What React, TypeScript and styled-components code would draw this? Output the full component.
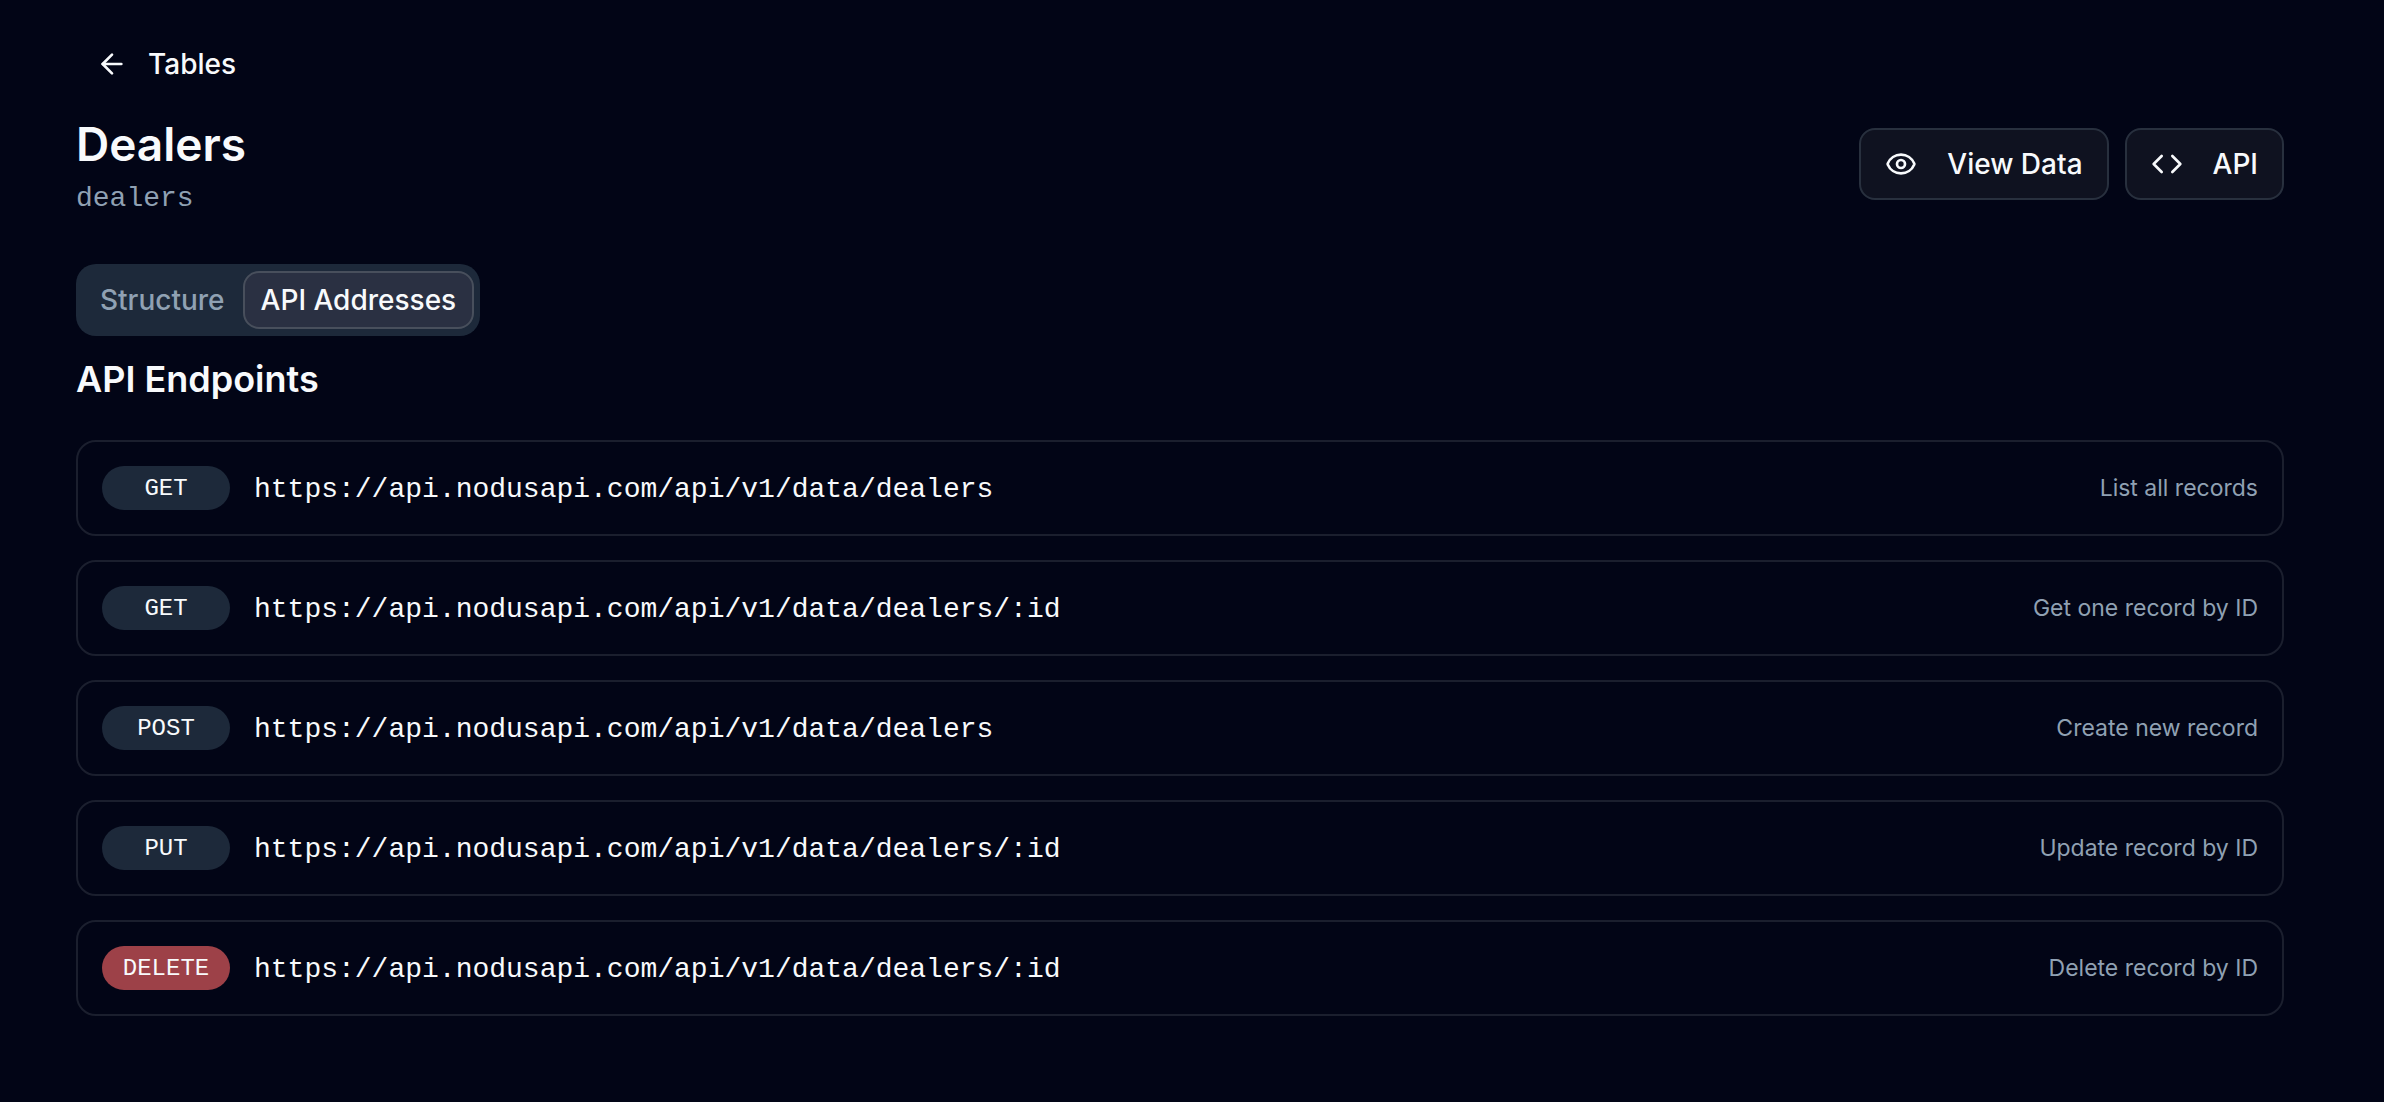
import React, { useState } from "react";
import styled, { createGlobalStyle, css } from "styled-components";
import { ArrowLeft, Code, Eye } from "lucide-react";

const color = {
  background: "#020516",
  foreground: "#f8fafc",
  muted: "#90a1b3",
  surface: "#1d293a",
  border: "#1b1f2e",
  control: "#0f1220",
  controlBorder: "#28303e",
  tabActive: "#2a3042",
  tabActiveBorder: "#484f5c",
  danger: "#9d4148",
};

const sans = `Inter, "Liberation Sans", sans-serif`;
const mono = `"Liberation Mono", "DejaVu Sans Mono", monospace`;

const GlobalStyle = createGlobalStyle`
  *, *::before, *::after { box-sizing: border-box; }
  body {
    margin: 0;
    background: ${color.background};
    color: ${color.foreground};
    font-family: ${sans};
    font-size: 28px;
    line-height: 40px;
  }
  button { font: inherit; color: inherit; cursor: pointer; }
`;

const Page = styled.main`
  min-height: 100vh;
  padding: 32px 100px 80px 76px;
`;

const BackLink = styled.a`
  display: inline-flex;
  align-items: center;
  gap: 20px;
  height: 64px;
  padding: 0 20px;
  color: inherit;
  font-weight: 500;
  text-decoration: none;
`;

const Header = styled.header`
  display: flex;
  align-items: center;
  justify-content: space-between;
  margin-top: 16px;
`;

const Title = styled.h1`
  margin: 0;
  font-size: 46px;
  line-height: 64px;
  font-weight: 600;
`;

const Slug = styled.p`
  margin: 0;
  padding-top: 6px;
  color: ${color.muted};
  font-family: ${mono};
  font-size: 28px;
  line-height: 34px;
`;

const Actions = styled.div`
  display: flex;
  gap: 16px;
`;

const ActionButton = styled.button`
  display: inline-flex;
  align-items: center;
  gap: 30px;
  height: 72px;
  padding: 0 24px;
  border: 2px solid ${color.controlBorder};
  border-radius: 16px;
  background: ${color.control};
  font-weight: 500;
`;

const TabList = styled.div`
  display: inline-flex;
  height: 72px;
  margin-top: 48px;
  padding: 7px 6px;
  border-radius: 20px;
  background: ${color.surface};
`;

const Tab = styled.button<{ $active: boolean }>`
  padding: 0 16px;
  border: 2px solid transparent;
  border-radius: 16px;
  background: transparent;
  color: ${color.muted};
  font-weight: 500;
  ${({ $active }) =>
    $active &&
    css`
      border-color: ${color.tabActiveBorder};
      background: ${color.tabActive};
      color: ${color.foreground};
    `}
`;

const SectionTitle = styled.h2`
  margin: 16px 0 34px;
  font-size: 36px;
  line-height: 54px;
  font-weight: 600;
`;

const EndpointList = styled.ul`
  display: grid;
  gap: 24px;
  margin: 0;
  padding: 0;
  list-style: none;
`;

const Endpoint = styled.li`
  display: flex;
  align-items: center;
  gap: 24px;
  padding: 24px;
  border: 2px solid ${color.border};
  border-radius: 20px;
`;

const Method = styled.span<{ $danger: boolean }>`
  width: 128px;
  padding-top: 2px;
  border-radius: 22px;
  background: ${({ $danger }) => ($danger ? color.danger : color.surface)};
  font-family: ${mono};
  font-size: 24px;
  line-height: 42px;
  font-weight: 500;
  text-align: center;
`;

const Address = styled.code`
  padding-top: 4px;
  font-family: ${mono};
  font-size: 28px;
  line-height: 40px;
`;

const Description = styled.span`
  margin-left: auto;
  color: ${color.muted};
  font-size: 23px;
  line-height: 32px;
`;

const base = "https://api.nodusapi.com/api/v1/data/dealers";

const endpoints = [
  { method: "GET", address: base, description: "List all records" },
  { method: "GET", address: `${base}/:id`, description: "Get one record by ID" },
  { method: "POST", address: base, description: "Create new record" },
  { method: "PUT", address: `${base}/:id`, description: "Update record by ID" },
  { method: "DELETE", address: `${base}/:id`, description: "Delete record by ID" },
];

const tabs = ["Structure", "API Addresses"];

export default function App() {
  const [active, setActive] = useState("API Addresses");

  return (
    <>
      <GlobalStyle />
      <Page>
        <BackLink href="#tables">
          <ArrowLeft size={32} aria-hidden />
          Tables
        </BackLink>
        <Header>
          <div>
            <Title>Dealers</Title>
            <Slug>dealers</Slug>
          </div>
          <Actions>
            <ActionButton type="button">
              <Eye size={32} aria-hidden />
              View Data
            </ActionButton>
            <ActionButton type="button">
              <Code size={32} aria-hidden />
              API
            </ActionButton>
          </Actions>
        </Header>
        <TabList role="tablist" aria-label="Table views">
          {tabs.map((tab) => (
            <Tab
              key={tab}
              type="button"
              role="tab"
              aria-selected={tab === active}
              $active={tab === active}
              onClick={() => setActive(tab)}
            >
              {tab}
            </Tab>
          ))}
        </TabList>
        <section>
          <SectionTitle>API Endpoints</SectionTitle>
          <EndpointList>
            {endpoints.map(({ method, address, description }) => (
              <Endpoint key={method + address}>
                <Method $danger={method === "DELETE"}>{method}</Method>
                <Address>{address}</Address>
                <Description>{description}</Description>
              </Endpoint>
            ))}
          </EndpointList>
        </section>
      </Page>
    </>
  );
}
